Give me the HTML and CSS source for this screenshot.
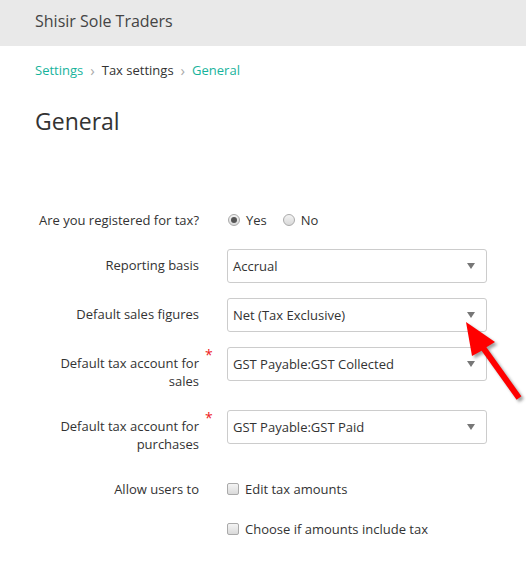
FILE: index.html
```html
<!DOCTYPE html>
<html>
<head>
<meta charset="utf-8">
<link rel="stylesheet" href="styles.css">
</head>
<body>
<header class="topbar"><span class="org">Shisir Sole Traders</span></header>
<nav class="crumbs">
  <a class="crumb link">Settings</a>
  <span class="sep">&#x203A;</span>
  <span class="crumb">Tax settings</span>
  <span class="sep">&#x203A;</span>
  <a class="crumb link">General</a>
</nav>
<h1 class="title">General</h1>
<form class="form">
  <div class="row row-radio">
    <div class="label">Are you registered for tax?</div>
    <div class="req"></div>
    <div class="control radios">
      <span class="opt"><span class="radio checked"></span>Yes</span>
      <span class="opt"><span class="radio"></span>No</span>
    </div>
  </div>
  <div class="row row-select first-select">
    <div class="label">Reporting basis</div>
    <div class="req"></div>
    <div class="control select"><span>Accrual</span><span class="caret"></span></div>
  </div>
  <div class="row row-select">
    <div class="label">Default sales figures</div>
    <div class="req"></div>
    <div class="control select"><span>Net (Tax Exclusive)</span><span class="caret"></span></div>
  </div>
  <div class="row row-select tall">
    <div class="label">Default tax account for sales</div>
    <div class="req">*</div>
    <div class="control select"><span>GST Payable:GST Collected</span><span class="caret"></span></div>
  </div>
  <div class="row row-select tall">
    <div class="label">Default tax account for purchases</div>
    <div class="req">*</div>
    <div class="control select"><span>GST Payable:GST Paid</span><span class="caret"></span></div>
  </div>
  <div class="row row-check first-check">
    <div class="label">Allow users to</div>
    <div class="req"></div>
    <div class="control"><span class="check"></span>Edit tax amounts</div>
  </div>
  <div class="row row-check">
    <div class="label"></div>
    <div class="req"></div>
    <div class="control"><span class="check"></span>Choose if amounts include tax</div>
  </div>
</form>
<svg class="arrow" width="526" height="563" viewBox="0 0 526 563">
  <defs>
    <filter id="sh" x="-30%" y="-30%" width="160%" height="160%">
      <feGaussianBlur stdDeviation="1.6"/>
    </filter>
  </defs>
  <path d="M466 322 L495 342 L486.4 347.3 L521.4 396.3 L516.6 399.7 L481.6 350.7 L472 356 Z" fill="#555" opacity="0.55" filter="url(#sh)" transform="translate(2.5 2.5)"/>
  <path d="M466 322 L495 342 L486.4 347.3 L521.4 396.3 L516.6 399.7 L481.6 350.7 L472 356 Z" fill="#f00"/>
</svg>
</body>
</html>
```
FILE: styles.css
```css
html, body {
  margin: 0;
  padding: 0;
  background: #fff;
}
body {
  font-family: "Open Sans", "DejaVu Sans", sans-serif;
  font-size: 13px;
  color: #333;
  width: 526px;
  height: 563px;
  overflow: hidden;
  position: relative;
}
.topbar {
  height: 46px;
  background: #e9e9e9;
  display: flex;
  align-items: center;
  padding-left: 35px;
  padding-bottom: 4px;
  box-sizing: border-box;
}
.org {
  font-size: 16px;
  color: #444;
}
.crumbs {
  margin-top: 15px;
  padding-left: 35px;
  line-height: 18px;
  display: flex;
  align-items: center;
}
.crumb.link {
  color: #17b39c;
}
.sep {
  color: #aaa;
  font-size: 15px;
  margin: 0 7px 0 7px;
  line-height: 18px;
}
.title {
  margin: 27px 0 0 0;
  padding-left: 35px;
  font-size: 23px;
  font-weight: 400;
  line-height: 30px;
  color: #333;
}
.form {
  margin-top: 74px;
  display: flex;
  flex-direction: column;
}
.row {
  display: grid;
  grid-template-columns: 164px 28px 260px;
  padding-left: 35px;
}
.label {
  text-align: right;
  line-height: 18px;
}
.req {
  color: #e22;
  font-size: 14px;
  line-height: 14px;
  padding-left: 6px;
  padding-top: 1px;
}
.row-radio .label, .row-check .label {
  line-height: 20px;
}
.control {
  display: flex;
  align-items: center;
  line-height: 20px;
}
.opt {
  display: flex;
  align-items: center;
  margin-right: 15px;
}
.radio {
  width: 10px;
  height: 10px;
  border: 1px solid #aaa;
  border-radius: 50%;
  background: linear-gradient(#f3f3f3, #d9d9d9);
  margin: 0 6px 0 1px;
  position: relative;
  flex: none;
}
.radio.checked::after {
  content: "";
  position: absolute;
  left: 2px;
  top: 2px;
  width: 6px;
  height: 6px;
  border-radius: 50%;
  background: #555;
}
.row-select {
  margin-top: 15px;
}
.first-select {
  margin-top: 19px;
}
.row-select .label {
  padding-top: 7px;
}
.tall {
  margin-top: 15px;
}
.tall .label {
  padding-bottom: 5px;
}
.select {
  height: 34px;
  box-sizing: border-box;
  border: 1px solid #ccc;
  border-radius: 3px;
  padding: 0 11px 0 5px;
  justify-content: space-between;
  align-self: start;
  color: #333;
}
.caret {
  width: 0;
  height: 0;
  border-left: 4px solid transparent;
  border-right: 4px solid transparent;
  border-top: 6px solid #777;
}
.row-check {
  margin-top: 20px;
}
.first-check {
  margin-top: 21px;
}
.check {
  width: 10px;
  height: 10px;
  border: 1px solid #aaa;
  border-radius: 2px;
  background: linear-gradient(#f4f4f4, #dadada);
  margin-right: 6px;
  flex: none;
}
.arrow {
  position: absolute;
  left: 0;
  top: 0;
  pointer-events: none;
}
```
